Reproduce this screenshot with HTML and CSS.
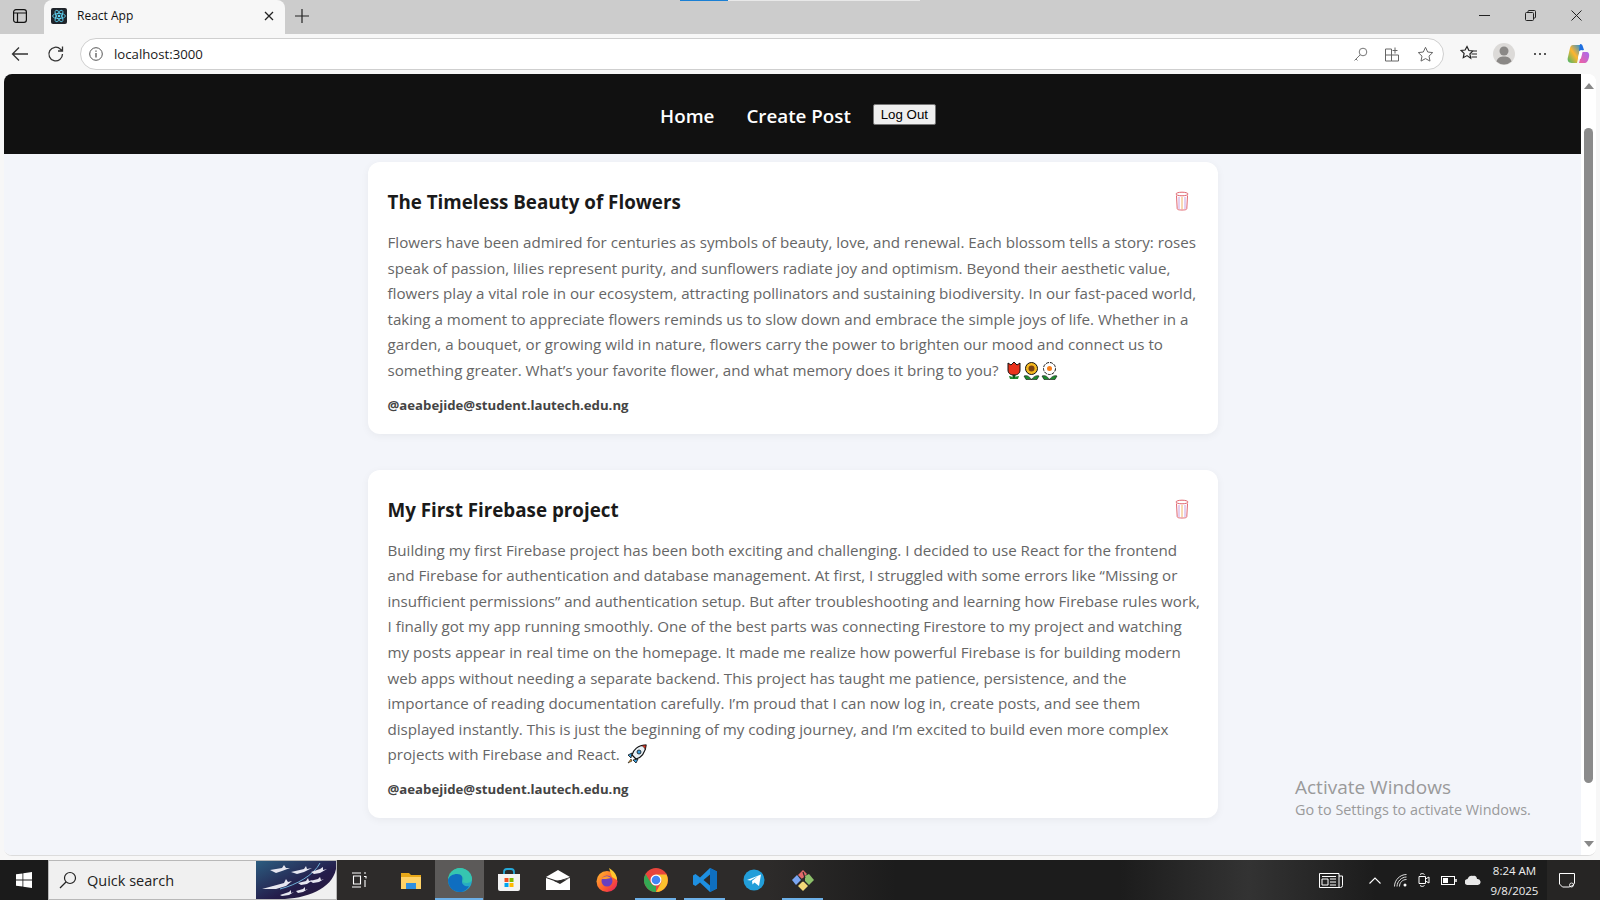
FILE: index.html
```html
<!DOCTYPE html>
<html lang="en">
<head>
    <meta charset="UTF-8">
    <title>React App</title>
    <link rel="stylesheet" href="styles.css">
</head>
<body>
    <!-- tab strip -->
    <div class="tabstrip">
        <div class="loading-bar"><span class="loading-done"></span></div>
        <div class="tab-toggle">
            <svg width="16" height="16" viewBox="0 0 16 16" fill="none" stroke="#111" stroke-width="1.2"><rect x="1.6" y="1.6" width="12.8" height="12.8" rx="2.4"/><path d="M1.6 5h12.8M5.5 5v9.4"/></svg>
        </div>
        <div class="tab">
            <svg class="favicon" width="16" height="16" viewBox="0 0 16 16"><rect width="16" height="16" rx="2" fill="#20252b"/><g fill="none" stroke="#61dafb" stroke-width=".8"><ellipse cx="8" cy="8" rx="6.4" ry="2.6"/><ellipse cx="8" cy="8" rx="6.4" ry="2.6" transform="rotate(60 8 8)"/><ellipse cx="8" cy="8" rx="6.4" ry="2.6" transform="rotate(120 8 8)"/></g><circle cx="8" cy="8" r="1.3" fill="#61dafb"/></svg>
            <span class="tab-title">React App</span>
            <svg class="tab-close" width="10" height="10" viewBox="0 0 10 10" stroke="#222" stroke-width="1.3"><path d="M1 1l8 8M9 1l-8 8"/></svg>
        </div>
        <div class="new-tab">
            <svg width="14" height="14" viewBox="0 0 14 14" stroke="#222" stroke-width="1.2"><path d="M7 0v14M0 7h14"/></svg>
        </div>
        <div class="window-controls">
            <svg width="11" height="11" viewBox="0 0 11 11" stroke="#222"><path d="M0 5.5h11"/></svg>
            <svg width="11" height="11" viewBox="0 0 11 11" fill="none" stroke="#222"><rect x=".5" y="2.5" width="8" height="8" rx="1"/><path d="M3 2.500V1.500a1 1 0 0 1 1-1h5.500a1 1 0 0 1 1 1V7a1 1 0 0 1-1 1H8.500"/></svg>
            <svg width="11" height="11" viewBox="0 0 11 11" stroke="#222"><path d="M.5.500l10 10M10.500.500l-10 10"/></svg>
        </div>
    </div>

    <!-- address bar -->
    <div class="toolbar">
        <svg class="tool-btn" width="18" height="18" viewBox="0 0 18 18" fill="none" stroke="#333" stroke-width="1.3"><path d="M17 9H1.500M8 2.500L1.500 9 8 15.500"/></svg>
        <svg class="tool-btn" width="18" height="18" viewBox="0 0 18 18" fill="none" stroke="#333" stroke-width="1.3"><path d="M15.500 9a6.800 6.800 0 1 1-2-4.800L15.500 6M15.500 1.500V6H11"/></svg>
        <div class="address">
            <svg width="14" height="14" viewBox="0 0 14 14" fill="none" stroke="#555"><circle cx="7" cy="7" r="6.300"/><path d="M7 6v4.500M7 3.500v1.300" stroke-width="1.300"/></svg>
            <span class="url">localhost:3000</span>
            <div class="address-icons">
                <svg width="15" height="15" viewBox="0 0 15 15" fill="none" stroke="#777"><circle cx="10" cy="5" r="3.800"/><path d="M7.200 7.800L1.500 13.500M3 12l1.500 1.500"/></svg>
                <svg width="15" height="15" viewBox="0 0 15 15" fill="none" stroke="#666"><path d="M.5 2h6v12h-6zM.5 8h13v6h-7M10 0.500v6M7.500 3.500h5"/></svg>
                <svg width="17" height="17" viewBox="0 0 17 17" fill="none" stroke="#666"><path d="M8.500 1.300l2.200 4.700 5 .6-3.700 3.500 1 5-4.500-2.500-4.500 2.500 1-5L1.300 6.600l5-.6z"/></svg>
            </div>
        </div>
        <svg class="fav-btn" width="18" height="18" viewBox="0 0 18 18" fill="none" stroke="#222" stroke-width="1.200"><path d="M7 1.500l1.900 4 4 .5-3 2.900.8 4.300L7 10.600l-3.700 2.100.8-4.300-3-2.900 4-.5zM11.500 9h5.500M11.500 12h5.500M12.500 6h4.500"/></svg>
        <div class="avatar"><svg width="22" height="22" viewBox="0 0 22 22"><circle cx="11" cy="11" r="11" fill="#dcdad8"/><circle cx="11" cy="8" r="4.500" fill="#8a8886"/><path d="M3.500 18.500c1-4 4-5 7.500-5s6.500 1 7.500 5a11 11 0 0 1-15 0z" fill="#8a8886"/></svg></div>
        <div class="more-btn"><i></i><i></i><i></i></div>
        <svg class="copilot" width="23" height="22" viewBox="0 0 23 22"><defs><linearGradient id="cpa" x1="0" y1="1" x2="1" y2="0"><stop offset="0" stop-color="#3fb56c"/><stop offset=".5" stop-color="#ffb52e"/><stop offset="1" stop-color="#1f8ee0"/></linearGradient><linearGradient id="cpb" x1="0" y1="1" x2="1" y2="0"><stop offset="0" stop-color="#f2609f"/><stop offset="1" stop-color="#a66bf0"/></linearGradient></defs><path d="M6 2h8l-4 18H5c-4 0-5-3-4-6l2-9c.500-2 1.500-3 3-3z" fill="url(#cpa)"/><path d="M13 1c2 0 2.500 1 3 3l1 3-5 1z" fill="#1e6fe0"/><path d="M12 20h5c3 0 4-2 5-6 .500-3 0-5-3-5h-4z" fill="url(#cpb)"/><path d="M12.500 8c1-1 3-1 3.200.5l-1.500 6c-.500 2-2.500 2-3.200.5z" fill="#fff"/></svg>
    </div>

    <!-- page area -->
    <div class="viewport">
        <div class="page">
            <nav class="navbar">
                <a class="nav-link" href="#">Home</a>
                <a class="nav-link" href="#">Create Post</a>
                <button class="logout">Log Out</button>
            </nav>
            <main class="posts">
                <article class="post">
                    <div class="post-head">
                        <h2 class="post-title">The Timeless Beauty of Flowers</h2>
                        <svg class="trash" width="14" height="20" viewBox="0 0 14 20" fill="none"><ellipse cx="7" cy="3" rx="6" ry="1.800" stroke="#e0646e"/><path d="M1.500 4.500l.7 13c0 1 1 1.500 4.800 1.500s4.800-.500 4.800-1.500l.7-13" stroke="#e0646e"/><path d="M4 6v12" stroke="#c9a0e0"/><path d="M7 6v12" stroke="#f2b468"/><path d="M10 6v12" stroke="#c9a0e0"/></svg>
                    </div>
                    <p class="post-text">Flowers have been admired for centuries as symbols of beauty, love, and renewal. Each blossom tells a story: roses speak of passion, lilies represent purity, and sunflowers radiate joy and optimism. Beyond their aesthetic value, flowers play a vital role in our ecosystem, attracting pollinators and sustaining biodiversity. In our fast-paced world, taking a moment to appreciate flowers reminds us to slow down and embrace the simple joys of life. Whether in a garden, a bouquet, or growing wild in nature, flowers carry the power to brighten our mood and connect us to something greater. What’s your favorite flower, and what memory does it bring to you?
                        <span class="emoji-row">
                            <svg width="16" height="18" viewBox="0 0 16 18"><path d="M8 11v6" stroke="#0a5c1e" stroke-width="3"/><path d="M2 1l3 2 3-3 3 3 3-2v7c0 3-2 5-6 5S2 11 2 8z" fill="#e8321c" stroke="#111"/><path d="M3 14c2 0 4 1 5 3 1-2 3-3 5-3l-1 3H4z" fill="#1d8a2e"/></svg>
                            <svg width="17" height="18" viewBox="0 0 17 18"><circle cx="8.500" cy="6.500" r="6" fill="#f5b81f" stroke="#111"/><circle cx="8.500" cy="6.500" r="3" fill="#7a4210"/><path d="M1 14c3-1 5 0 7.500 3.500C11 14 14 13 16 14l-2 3.500H3z" fill="#1d8a2e" stroke="#111" stroke-width=".6"/></svg>
                            <svg width="17" height="18" viewBox="0 0 17 18"><circle cx="8.500" cy="6.500" r="6" fill="#fff" stroke="#111" stroke-dasharray="3 1"/><circle cx="8.500" cy="6.500" r="2.500" fill="#f77f1c"/><path d="M1 14c3-1 5 0 7.500 3.500C11 14 14 13 16 14l-2 3.500H3z" fill="#1d8a2e" stroke="#111" stroke-width=".6"/></svg>
                        </span>
                    </p>
                    <p class="post-author">@aeabejide@student.lautech.edu.ng</p>
                </article>
                <article class="post">
                    <div class="post-head">
                        <h2 class="post-title">My First Firebase project</h2>
                        <svg class="trash" width="14" height="20" viewBox="0 0 14 20" fill="none"><ellipse cx="7" cy="3" rx="6" ry="1.800" stroke="#e0646e"/><path d="M1.500 4.500l.7 13c0 1 1 1.500 4.800 1.500s4.800-.500 4.800-1.500l.7-13" stroke="#e0646e"/><path d="M4 6v12" stroke="#c9a0e0"/><path d="M7 6v12" stroke="#f2b468"/><path d="M10 6v12" stroke="#c9a0e0"/></svg>
                    </div>
                    <p class="post-text">Building my first Firebase project has been both exciting and challenging. I decided to use React for the frontend and Firebase for authentication and database management. At first, I struggled with some errors like “Missing or insufficient permissions” and authentication setup. But after troubleshooting and learning how Firebase rules work, I finally got my app running smoothly. One of the best parts was connecting Firestore to my project and watching my posts appear in real time on the homepage. It made me realize how powerful Firebase is for building modern web apps without needing a separate backend. This project has taught me patience, persistence, and the importance of reading documentation carefully. I’m proud that I can now log in, create posts, and see them displayed instantly. This is just the beginning of my coding journey, and I’m excited to build even more complex projects with Firebase and React.
                        <span class="emoji-row">
                            <svg width="20" height="20" viewBox="0 0 20 20"><path d="M5 11c1-5 6-10 14-10-.500 8-5 13-10 14z" fill="#e8f0f5" stroke="#111" stroke-width="1.200"/><path d="M14 1.500c2 .500 3.500 2 4.500 4L19 1z" fill="#e8321c" stroke="#111" stroke-width=".6"/><circle cx="12" cy="8" r="2" fill="#3aa0e0" stroke="#111" stroke-width=".8"/><path d="M5 9L1 11l3 3zM11 15l-2 4-3-3z" fill="#3aa0e0" stroke="#111" stroke-width=".8"/><path d="M4 15l-3 4 4-2z" fill="#f5a01f" stroke="#111" stroke-width=".6"/></svg>
                        </span>
                    </p>
                    <p class="post-author">@aeabejide@student.lautech.edu.ng</p>
                </article>
            </main>
            <div class="activate">
                <div class="activate-title">Activate Windows</div>
                <div class="activate-sub">Go to Settings to activate Windows.</div>
            </div>
        </div>
        <div class="scrollbar">
            <span class="arrow-up"></span>
            <div class="track"><div class="thumb"></div></div>
            <span class="arrow-down"></span>
        </div>
    </div>

    <!-- windows taskbar -->
    <footer class="taskbar">
        <div class="start">
            <svg width="16" height="16" viewBox="0 0 16 16" fill="#fff"><path d="M0 2.300l6.500-.9v6.200H0zM7.300 1.300L16 0v7.600H7.300zM0 8.400h6.500v6.200L0 13.700zM7.300 8.400H16V16l-8.700-1.300z"/></svg>
        </div>
        <div class="search">
            <svg width="18" height="18" viewBox="0 0 18 18" fill="none" stroke="#222" stroke-width="1.200"><circle cx="11" cy="7" r="5.500"/><path d="M7 11l-6 6"/></svg>
            <span class="search-text">Quick search</span>
            <svg class="search-art" width="80" height="38" viewBox="0 0 80 38"><defs><linearGradient id="sky" x1="0" y1="0" x2="1" y2="1"><stop offset="0" stop-color="#2c5d80"/><stop offset=".6" stop-color="#241c4a"/><stop offset="1" stop-color="#2a1a3a"/></linearGradient></defs><path d="M0 0h80v8C76 28 50 38 24 38H0z" fill="url(#sky)"/><path d="M64 2C58 14 40 24 24 28" stroke="#6fb0d8" fill="none"/><g fill="#e6e6f0"><path d="M6 28l22-6 2-4 2 3 4-1-6 5-10 3z"/><path d="M14 9l12-2 2-3 2 3 4 0-8 3-6 2z"/><path d="M35 11l13-3 2-3 1 3 5-1-8 4-7 2z"/><path d="M55 11l9-3 3-2v3l4-1-7 4-6 1z"/><path d="M42 22l8-2 2-3 1 3 4-1-6 4-6 1z"/><path d="M54 20l8-2 2-2 1 3 3-1-5 3-6 1z"/><path d="M24 34l9-3 2-2v3l3-1-5 3-7 1z"/><path d="M40 30l7-2 2-2v3l3-1-5 3-5 1z"/></g></svg>
        </div>
        <div class="task-icons">
            <div class="task-icon task-view"><svg width="16" height="16" viewBox="0 0 16 16" fill="none" stroke="#fff" stroke-width="1.100"><path d="M1 1h9M1 15h9M2.500 4h7v8h-7zM13 1h2M13 4.500h2v2M14 8v7"/></svg></div>
            <div class="task-icon"><svg width="20" height="18" viewBox="0 0 20 18"><path d="M0 2h8l2 2h10v3H0z" fill="#e8a818"/><path d="M0 6h20v12H0z" fill="#ffd267"/><path d="M5 12h10v6H5z" fill="#2f8fe0"/></svg></div>
            <div class="task-icon active-app is-open"><svg width="24" height="24" viewBox="0 0 24 24"><defs><linearGradient id="edgeA" x1="0" y1="0" x2="1" y2="1"><stop offset="0" stop-color="#3dd08a"/><stop offset="1" stop-color="#1f9fd8"/></linearGradient></defs><circle cx="12" cy="12" r="12" fill="url(#edgeA)"/><path d="M0 12C1 5 6 0 12 0c6 0 12 5 12 11 0 3-3 4-6 4-2 0-3-1-3-2 1-2 1-6-5-6-5 0-10 3-10 5z" fill="#36c5b0"/><path d="M0 12c1-4 5-6 9-6 5 0 6 3 5 7-.500 4 4 6 7 5-2 4-6 6-9 6C5 24 0 19 0 12z" fill="#0f6ec0"/></svg></div>
            <div class="task-icon"><svg width="24" height="24" viewBox="0 0 24 24"><path d="M7 7V4a3 3 0 0 1 3-3h4a3 3 0 0 1 3 3v3" fill="none" stroke="#25a8d8" stroke-width="1.800"/><path d="M1 6h22v15a2 2 0 0 1-2 2H3a2 2 0 0 1-2-2z" fill="#f3f3f3"/><path d="M7.500 10h4v4h-4z" fill="#f25022"/><path d="M12.500 10h4v4h-4z" fill="#7fba00"/><path d="M7.500 15h4v4h-4z" fill="#00a4ef"/><path d="M12.500 15h4v4h-4z" fill="#ffb900"/></svg></div>
            <div class="task-icon"><svg width="24" height="20" viewBox="0 0 24 20"><path d="M0 7l12-7 12 7-12 4z" fill="#fff"/><path d="M0 8l11 4 13-4v12H0z" fill="#fff"/><path d="M8 11l14-2-8 5z" fill="#2d2b2a"/></svg></div>
            <div class="task-icon"><svg width="24" height="24" viewBox="0 0 24 24"><defs><linearGradient id="ffA" x1="0" y1="0" x2="1" y2="1"><stop offset="0" stop-color="#ffbd2e"/><stop offset=".6" stop-color="#ff5a2e"/><stop offset="1" stop-color="#e3176c"/></linearGradient></defs><circle cx="12" cy="13.500" r="10.500" fill="url(#ffA)"/><path d="M14 0c5 3 8 7 8 12l-5-3z" fill="#ffc82e"/><circle cx="12" cy="13" r="5.500" fill="#6a3fc0"/><path d="M6 11c3-3 6-4 10-1l-5 1z" fill="#ff9a2e"/></svg></div>
            <div class="task-icon is-open"><svg width="24" height="24" viewBox="0 0 24 24"><circle cx="12" cy="12" r="12" fill="#e8453c"/><path d="M12 24A12 12 0 0 1 1.600 6L7 15c1 2 3 3 5 3z" fill="#34a853"/><path d="M12 6.500h10.500A12 12 0 0 1 12 24l5-9c1-2 1-6-5-8.500z" fill="#fbc02d"/><circle cx="12" cy="12" r="5.500" fill="#fff"/><circle cx="12" cy="12" r="4.300" fill="#4285f4"/></svg></div>
            <div class="task-icon is-open"><svg width="24" height="24" viewBox="0 0 24 24"><path d="M17 0l7 3.500v17L17 24 7 14.500 2.500 18 0 16.500V7.500L2.500 6 7 9.500zM17 6.500L10.500 12l6.500 5.500z" fill="#1e8fe0"/><path d="M17 0l7 3.500v17L17 24z" fill="#0f6fc0"/></svg></div>
            <div class="task-icon"><svg width="22" height="22" viewBox="0 0 22 22"><circle cx="11" cy="11" r="10.500" fill="#229ed9"/><path d="M4 11l14-5.500-2 11.500-4.500-3.500-2 2-.5-3.500 6-5-7.500 4.500z" fill="#fff"/></svg></div>
            <div class="task-icon is-open"><svg width="24" height="24" viewBox="0 0 24 24"><path d="M7 7l5-5 4 4-5 5z" fill="#e06a6a"/><path d="M1 12l5-5 4 5-5 5z" fill="#7aa6f2"/><path d="M14 8l4-2 5 6-5 5-4-4z" fill="#8cc06a"/><path d="M7 18l5-5 5 5-5 5z" fill="#f2d878"/><circle cx="12" cy="12" r="1.800" fill="#2d2b2a"/><path d="M12 4l2 6" stroke="#2d2b2a" stroke-width="1.200"/></svg></div>
        </div>
        <div class="tray">
            <div class="tray-icons">
                <svg class="tray-news" width="24" height="15" viewBox="0 0 24 15" fill="none" stroke="#fff"><path d="M.5.500h19.500v14H.5zM3 3.500h14M3 6h6v6H3zM11 6h6M11 9h6M11 12h6M20 3h3.500v9.500a2 2 0 0 1-2 2H20"/></svg>
                <svg class="tray-chevron" width="12" height="7" viewBox="0 0 12 7" fill="none" stroke="#fff" stroke-width="1.100"><path d="M.5 6.500L6 1l5.500 5.500"/></svg>
                <svg width="13" height="13" viewBox="0 0 13 13" fill="none" stroke="#ddd"><path d="M.5 12.500C.5 6 6 .5 12.500.5M3 12.500c0-5 4.500-9.500 9.500-9.500M5.500 12.500c0-4 3-7 7-7"/><circle cx="11" cy="11" r="1.500" fill="#fff" stroke="none"/></svg>
                <svg width="12" height="14" viewBox="0 0 12 14" fill="none" stroke="#fff"><path d="M1 3.500h6.500v7H1zM7.500 6L11 4v6L7.500 8zM2 1.500C3.500.3 5 .3 6.500 1.500M2 12.500c1.500 1.200 3 1.200 4.500 0"/></svg>
                <svg width="16" height="9" viewBox="0 0 16 9" fill="none" stroke="#fff"><rect x=".5" y=".5" width="13" height="8"/><path d="M2 2h5v5H2z" fill="#fff" stroke="none"/><path d="M15 3v3" stroke-width="1.500"/></svg>
                <svg class="tray-cloud" width="16" height="10" viewBox="0 0 16 10" fill="#e8e8e8"><path d="M3 10a3 3 0 0 1-.5-6C3.500 1 6 0 8 1c2-1 4 .500 4 3a3 3 0 0 1 1 6z"/></svg>
            </div>
            <div class="clock"><div>8:24 AM</div><div>9/8/2025</div></div>
            <div class="notify"><svg width="16" height="15" viewBox="0 0 16 15" fill="none" stroke="#fff"><path d="M.5.500h15v9.500L14 12.500l-4 1.500H3.500L.5 11z"/><circle cx="12.500" cy="12" r="2" stroke-width=".8"/></svg></div>
        </div>
    </footer>
</body>
</html>
```

FILE: styles.css
```css
* {
    margin: 0;
    padding: 0;
    box-sizing: border-box;
}

body {
    width: 1600px;
    height: 900px;
    overflow: hidden;
    background-color: #f7f7f7;
    font-family: "Open Sans", "Noto Sans", sans-serif;
    display: flex;
    flex-direction: column;
}

/* tab strip */
.tabstrip {
    height: 34px;
    background-color: #cccccc;
    display: flex;
    position: relative;
    flex-shrink: 0;
}

.loading-bar {
    position: absolute;
    top: 0;
    left: 680px;
    width: 240px;
    height: 1px;
    background-color: #e8e8e8;
}

.loading-done {
    display: block;
    width: 48px;
    height: 1px;
    background-color: #1a7fd4;
}

.tab-toggle {
    width: 44px;
    display: flex;
    align-items: center;
    justify-content: center;
    padding: 0 4px 2px 0;
}

.tab {
    width: 241px;
    background-color: #f7f7f7;
    border-radius: 8px 8px 0 0;
    display: flex;
    align-items: center;
    padding: 0 11px 3px 7px;
}

.tab-title {
    font-size: 12px;
    color: #111;
    margin-left: 10px;
    flex: 1;
}

.new-tab {
    width: 34px;
    display: flex;
    align-items: center;
    justify-content: center;
    padding-bottom: 3px;
}

.window-controls {
    margin-left: auto;
    display: flex;
    align-items: center;
    gap: 35px;
    padding: 0 18px 3px 0;
}

/* toolbar */
.toolbar {
    height: 40px;
    display: flex;
    align-items: center;
    flex-shrink: 0;
    padding-left: 11px;
}

.tool-btn {
    margin-right: 18px;
}

.address {
    width: 1364px;
    height: 32px;
    margin-left: -3px;
    background-color: #fff;
    border: 1px solid #cfcfcf;
    border-radius: 16px;
    display: flex;
    align-items: center;
    padding: 0 9px 0 8px;
}

.url {
    font-size: 13.200px;
    color: #1a1a1a;
    margin-left: 11px;
    flex: 1;
}

.address-icons {
    display: flex;
    align-items: center;
    gap: 17px;
}

.fav-btn {
    margin-left: 16px;
}

.avatar {
    margin-left: 15px;
    display: flex;
}

.more-btn {
    margin-left: 19px;
    display: flex;
    gap: 3px;
}

.more-btn i {
    width: 2px;
    height: 2px;
    background-color: #222;
    border-radius: 50%;
}

.copilot {
    margin-left: 21px;
}

/* page */
.viewport {
    flex: 1;
    margin: 0 4px 4px;
    min-height: 0;
    background-color: #fff;
    border-radius: 8px;
    overflow: hidden;
    display: flex;
    border-bottom: 1px solid #dcdcdc;
    position: relative;
}

.page {
    flex: 1;
    background-color: #f3f5fa;
}

.navbar {
    height: 80px;
    background-color: #111;
    display: flex;
    justify-content: center;
    align-items: flex-start;
    padding-top: 30px;
    padding-right: 5px;
}

.nav-link {
    color: #fff;
    text-decoration: none;
    font-size: 18.800px;
    font-weight: 600;
    line-height: 24px;
    margin: 0 16px;
}

.logout {
    font-family: "Liberation Sans", Arial, sans-serif;
    font-size: 13.300px;
    color: #000;
    background-color: #efefef;
    border: 1px solid #767676;
    border-radius: 2px;
    height: 21px;
    width: 63px;
    margin-left: 6px;
}

.posts {
    display: flex;
    flex-direction: column;
    align-items: center;
    gap: 36px;
    padding-top: 8px;
}

.post {
    width: 850px;
    background-color: #fff;
    border-radius: 12px;
    padding: 20px 16px 19px 20px;
    box-shadow: 0 2px 8px rgba(0, 0, 0, 0.05);
}

.post-head {
    display: flex;
    justify-content: space-between;
    align-items: center;
    padding-right: 13px;
    margin-bottom: 8px;
}

.trash {
    margin-bottom: 2px;
}

.post-title {
    font-size: 18.800px;
    font-weight: 700;
    color: #1a1a1a;
    line-height: 40px;
}

.post-text {
    font-size: 15.150px;
    line-height: 25.600px;
    color: #666;
}

.emoji-row {
    display: inline-flex;
    gap: 1px;
    margin-left: 3px;
    vertical-align: -4px;
}

.post-author {
    font-size: 13.200px;
    font-weight: 700;
    color: #444;
    margin-top: 11px;
    line-height: 20px;
}

.activate {
    position: absolute;
    left: 1291px;
    top: 700px;
    color: #9a9a9a;
}

.activate-title {
    font-size: 19px;
    line-height: 26px;
}

.activate-sub {
    font-size: 14.400px;
    line-height: 20px;
}

/* scrollbar */
.scrollbar {
    width: 15px;
    background-color: #fff;
    display: flex;
    flex-direction: column;
    align-items: center;
}

.arrow-up, .arrow-down {
    width: 0;
    height: 0;
    border-left: 5px solid transparent;
    border-right: 5px solid transparent;
    flex-shrink: 0;
}

.arrow-up {
    border-bottom: 6px solid #888;
    margin-top: 9px;
}

.arrow-down {
    border-top: 6px solid #888;
    margin-bottom: 8px;
}

.track {
    flex: 1;
    width: 9px;
    padding-top: 39px;
    padding-bottom: 58px;
    display: flex;
}

.thumb {
    flex: 1;
    background-color: #8b8b8b;
    border-radius: 5px;
}

/* taskbar */
.taskbar {
    height: 40px;
    flex-shrink: 0;
    background: linear-gradient(90deg, #2d2b2a 0, #2d2b2a 48%, #1c1c1c 56%, #1c1c1c 70%, #333 78%, #1c1c1c 86%, #1c1c1c 100%);
    display: flex;
    color: #fff;
}

.start {
    width: 48px;
    background-color: #1b1b1b;
    display: flex;
    align-items: center;
    justify-content: center;
}

.search {
    width: 289px;
    background-color: #f0f0f0;
    border: 1px solid #b8b8b8;
    display: flex;
    align-items: center;
    padding-left: 10px;
    overflow: hidden;
}

.search-text {
    font-size: 14.500px;
    color: #222;
    margin-left: 10px;
    flex: 1;
}

.task-icons {
    display: flex;
}

.task-icon {
    width: 49px;
    display: flex;
    align-items: center;
    justify-content: center;
    position: relative;
}

.task-view {
    padding-right: 6px;
}

.active-app {
    background-color: #5c5a59;
}

.is-open::after {
    content: "";
    position: absolute;
    bottom: 0;
    left: 4px;
    right: 4px;
    height: 2px;
    background-color: #6cb0e8;
}

.active-app::after {
    left: 0;
    right: 1px;
}

.tray {
    margin-left: auto;
    width: 300px;
    display: flex;
    align-items: center;
    padding-left: 19px;
}

.tray-icons {
    display: flex;
    align-items: center;
    gap: 11px;
    margin-right: 1px;
}

.tray-news {
    margin-right: 15px;
}

.tray-chevron {
    margin-right: 2px;
}

.tray-cloud {
    margin-left: -3px;
}

.clock {
    flex: 1;
    font-size: 11.500px;
    line-height: 20px;
    text-align: center;
    color: #eee;
    padding-top: 1px;
}

.notify {
    width: 53px;
    height: 100%;
    background-color: #262524;
    display: flex;
    align-items: center;
    justify-content: center;
    padding-right: 14px;
}
```
